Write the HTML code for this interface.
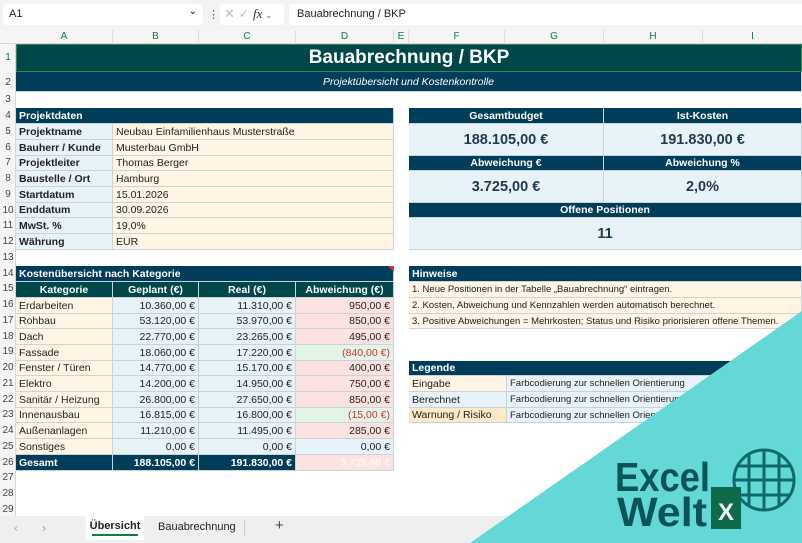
<!DOCTYPE html>
<html><head><meta charset="utf-8"><style>
*{margin:0;padding:0;box-sizing:border-box}
body{width:802px;height:543px;overflow:hidden;background:#fff;font-family:"Liberation Sans",Arial,sans-serif;font-size:10.5px;color:#222;position:relative}
.a{position:absolute;white-space:nowrap;overflow:hidden}
.c{position:absolute;white-space:nowrap;overflow:hidden;display:flex;align-items:center;padding:0 3px;border-right:1px solid #c9d3da;border-bottom:1px solid #c9d3da}
.r{justify-content:flex-end}
.m{justify-content:center}
.nv{background:#003d5a;color:#fff;font-weight:bold}
.tl{background:#00474a;color:#fff;font-weight:bold}
.cr{background:#fff5e2}
.bl{background:#e8f2f9}
.pk{background:#fde2e2}
.gr{background:#e2f3e8;color:#e0302a}
.b{font-weight:bold}
.rn{position:absolute;left:0;width:16px;text-align:center;font-size:10px;color:#444}
.kv{font-size:14.5px;font-weight:bold;color:#1e3a4f;justify-content:center}
</style></head><body>
<div class="a" style="left:0;top:0;width:802px;height:30px;background:#f3f3f3"></div>
<div class="a" style="left:3px;top:4px;width:200px;height:21px;background:#fff;border-radius:4px;padding:4px 6px;font-size:11px">A1<span style="position:absolute;right:6px;top:2px;font-size:10px">&#8964;</span></div>
<div class="a" style="left:208px;top:8px;font-size:11px;color:#555">&#8942;</div>
<div class="a" style="left:220px;top:4px;width:64px;height:21px;background:#fff;border-radius:4px;color:#bbb;font-size:13px;padding:2px 4px">&#10005; &#10003; <i style="color:#333;font-family:'Liberation Serif';font-size:13px">fx</i><span style="font-size:9px;color:#777"> &#8964;</span></div>
<div class="a" style="left:289px;top:4px;width:513px;height:21px;background:#fff;border-radius:4px 0 0 4px;padding:4px 8px;font-size:11px">Bauabrechnung / BKP</div>
<div class="a" style="left:0;top:30px;width:802px;height:14px;background:#f5f5f5;border-bottom:1px solid #d6d6d6"></div>
<div class="a" style="left:16px;top:30px;width:97px;height:14px;text-align:center;color:#107c41;font-size:10px;line-height:14px;border-right:1px solid #ddd">A</div>
<div class="a" style="left:113px;top:30px;width:86px;height:14px;text-align:center;color:#107c41;font-size:10px;line-height:14px;border-right:1px solid #ddd">B</div>
<div class="a" style="left:199px;top:30px;width:97px;height:14px;text-align:center;color:#107c41;font-size:10px;line-height:14px;border-right:1px solid #ddd">C</div>
<div class="a" style="left:296px;top:30px;width:98px;height:14px;text-align:center;color:#107c41;font-size:10px;line-height:14px;border-right:1px solid #ddd">D</div>
<div class="a" style="left:394px;top:30px;width:15px;height:14px;text-align:center;color:#107c41;font-size:10px;line-height:14px;border-right:1px solid #ddd">E</div>
<div class="a" style="left:409px;top:30px;width:96px;height:14px;text-align:center;color:#107c41;font-size:10px;line-height:14px;border-right:1px solid #ddd">F</div>
<div class="a" style="left:505px;top:30px;width:99px;height:14px;text-align:center;color:#107c41;font-size:10px;line-height:14px;border-right:1px solid #ddd">G</div>
<div class="a" style="left:604px;top:30px;width:99px;height:14px;text-align:center;color:#107c41;font-size:10px;line-height:14px;border-right:1px solid #ddd">H</div>
<div class="a" style="left:703px;top:30px;width:99px;height:14px;text-align:center;color:#107c41;font-size:10px;line-height:14px">I</div>
<div class="a" style="left:0;top:44px;width:16px;height:472px;background:#f5f5f5;border-right:1px solid #d6d6d6"></div>
<div class="rn" style="top:52px;color:#107c41">1</div><div class="rn" style="top:77px">2</div><div class="rn" style="top:94px">3</div>
<div class="rn" style="top:110px">4</div><div class="rn" style="top:126px">5</div><div class="rn" style="top:142px">6</div><div class="rn" style="top:157px">7</div><div class="rn" style="top:173px">8</div><div class="rn" style="top:189px">9</div><div class="rn" style="top:205px">10</div><div class="rn" style="top:220px">11</div><div class="rn" style="top:236px">12</div><div class="rn" style="top:252px">13</div><div class="rn" style="top:268px">14</div><div class="rn" style="top:283px">15</div><div class="rn" style="top:299px">16</div><div class="rn" style="top:315px">17</div><div class="rn" style="top:331px">18</div><div class="rn" style="top:346px">19</div><div class="rn" style="top:362px">20</div><div class="rn" style="top:378px">21</div><div class="rn" style="top:394px">22</div><div class="rn" style="top:409px">23</div><div class="rn" style="top:425px">24</div><div class="rn" style="top:441px">25</div><div class="rn" style="top:457px">26</div><div class="rn" style="top:472px">27</div><div class="rn" style="top:488px">28</div><div class="rn" style="top:504px">29</div>
<div class="c m" style="left:16px;top:44px;width:786px;height:28px;background:#00474a;color:#fff;font-weight:bold;font-size:19px;border:1.5px solid #2e8b57">Bauabrechnung / BKP</div>
<div class="c m" style="left:16px;top:72px;width:786px;height:20px;background:#003d5a;color:#fff;font-style:italic;font-size:10.5px">Projektübersicht und Kostenkontrolle</div>
<div class="c nv" style="left:16px;top:108px;width:378px;height:16px">Projektdaten</div>
<div class="c bl b" style="left:16px;top:124px;width:97px;height:16px">Projektname</div><div class="c cr" style="left:113px;top:124px;width:281px;height:16px">Neubau Einfamilienhaus Musterstraße</div>
<div class="c bl b" style="left:16px;top:140px;width:97px;height:16px">Bauherr / Kunde</div><div class="c cr" style="left:113px;top:140px;width:281px;height:16px">Musterbau GmbH</div>
<div class="c bl b" style="left:16px;top:156px;width:97px;height:15px">Projektleiter</div><div class="c cr" style="left:113px;top:156px;width:281px;height:15px">Thomas Berger</div>
<div class="c bl b" style="left:16px;top:171px;width:97px;height:16px">Baustelle / Ort</div><div class="c cr" style="left:113px;top:171px;width:281px;height:16px">Hamburg</div>
<div class="c bl b" style="left:16px;top:187px;width:97px;height:16px">Startdatum</div><div class="c cr" style="left:113px;top:187px;width:281px;height:16px">15.01.2026</div>
<div class="c bl b" style="left:16px;top:203px;width:97px;height:15px">Enddatum</div><div class="c cr" style="left:113px;top:203px;width:281px;height:15px">30.09.2026</div>
<div class="c bl b" style="left:16px;top:218px;width:97px;height:16px">MwSt. %</div><div class="c cr" style="left:113px;top:218px;width:281px;height:16px">19,0%</div>
<div class="c bl b" style="left:16px;top:234px;width:97px;height:16px">Währung</div><div class="c cr" style="left:113px;top:234px;width:281px;height:16px">EUR</div>
<div class="c nv m" style="left:409px;top:108px;width:195px;height:16px">Gesamtbudget</div><div class="c nv m" style="left:604px;top:108px;width:198px;height:16px">Ist-Kosten</div>
<div class="c bl kv" style="left:409px;top:124px;width:195px;height:32px">188.105,00 €</div><div class="c bl kv" style="left:604px;top:124px;width:198px;height:32px">191.830,00 €</div>
<div class="c nv m" style="left:409px;top:156px;width:195px;height:15px">Abweichung €</div><div class="c nv m" style="left:604px;top:156px;width:198px;height:15px">Abweichung %</div>
<div class="c bl kv" style="left:409px;top:171px;width:195px;height:32px">3.725,00 €</div><div class="c bl kv" style="left:604px;top:171px;width:198px;height:32px">2,0%</div>
<div class="c nv m" style="left:409px;top:203px;width:393px;height:15px">Offene Positionen</div>
<div class="c bl kv" style="left:409px;top:218px;width:393px;height:32px">11</div>
<div class="c nv" style="left:16px;top:266px;width:378px;height:16px">Kostenübersicht nach Kategorie</div>
<div class="a" style="left:388px;top:266px;width:0;height:0;border-left:6px solid transparent;border-top:6px solid #e03030"></div>
<div class="c tl m" style="left:16px;top:282px;width:97px;height:16px">Kategorie</div><div class="c tl m" style="left:113px;top:282px;width:86px;height:16px">Geplant (€)</div><div class="c tl m" style="left:199px;top:282px;width:97px;height:16px">Real (€)</div><div class="c tl m" style="left:296px;top:282px;width:98px;height:16px">Abweichung (€)</div>
<div class="c cr" style="left:16px;top:298px;width:97px;height:16px">Erdarbeiten</div><div class="c bl r" style="left:113px;top:298px;width:86px;height:16px">10.360,00 €</div><div class="c bl r" style="left:199px;top:298px;width:97px;height:16px">11.310,00 €</div><div class="c pk r" style="left:296px;top:298px;width:98px;height:16px">950,00 €</div>
<div class="c cr" style="left:16px;top:314px;width:97px;height:15px">Rohbau</div><div class="c bl r" style="left:113px;top:314px;width:86px;height:15px">53.120,00 €</div><div class="c bl r" style="left:199px;top:314px;width:97px;height:15px">53.970,00 €</div><div class="c pk r" style="left:296px;top:314px;width:98px;height:15px">850,00 €</div>
<div class="c cr" style="left:16px;top:329px;width:97px;height:16px">Dach</div><div class="c bl r" style="left:113px;top:329px;width:86px;height:16px">22.770,00 €</div><div class="c bl r" style="left:199px;top:329px;width:97px;height:16px">23.265,00 €</div><div class="c pk r" style="left:296px;top:329px;width:98px;height:16px">495,00 €</div>
<div class="c cr" style="left:16px;top:345px;width:97px;height:16px">Fassade</div><div class="c bl r" style="left:113px;top:345px;width:86px;height:16px">18.060,00 €</div><div class="c bl r" style="left:199px;top:345px;width:97px;height:16px">17.220,00 €</div><div class="c gr r" style="left:296px;top:345px;width:98px;height:16px">(840,00 €)</div>
<div class="c cr" style="left:16px;top:361px;width:97px;height:15px">Fenster / Türen</div><div class="c bl r" style="left:113px;top:361px;width:86px;height:15px">14.770,00 €</div><div class="c bl r" style="left:199px;top:361px;width:97px;height:15px">15.170,00 €</div><div class="c pk r" style="left:296px;top:361px;width:98px;height:15px">400,00 €</div>
<div class="c cr" style="left:16px;top:376px;width:97px;height:16px">Elektro</div><div class="c bl r" style="left:113px;top:376px;width:86px;height:16px">14.200,00 €</div><div class="c bl r" style="left:199px;top:376px;width:97px;height:16px">14.950,00 €</div><div class="c pk r" style="left:296px;top:376px;width:98px;height:16px">750,00 €</div>
<div class="c cr" style="left:16px;top:392px;width:97px;height:16px">Sanitär / Heizung</div><div class="c bl r" style="left:113px;top:392px;width:86px;height:16px">26.800,00 €</div><div class="c bl r" style="left:199px;top:392px;width:97px;height:16px">27.650,00 €</div><div class="c pk r" style="left:296px;top:392px;width:98px;height:16px">850,00 €</div>
<div class="c cr" style="left:16px;top:408px;width:97px;height:15px">Innenausbau</div><div class="c bl r" style="left:113px;top:408px;width:86px;height:15px">16.815,00 €</div><div class="c bl r" style="left:199px;top:408px;width:97px;height:15px">16.800,00 €</div><div class="c gr r" style="left:296px;top:408px;width:98px;height:15px">(15,00 €)</div>
<div class="c cr" style="left:16px;top:423px;width:97px;height:16px">Außenanlagen</div><div class="c bl r" style="left:113px;top:423px;width:86px;height:16px">11.210,00 €</div><div class="c bl r" style="left:199px;top:423px;width:97px;height:16px">11.495,00 €</div><div class="c pk r" style="left:296px;top:423px;width:98px;height:16px">285,00 €</div>
<div class="c cr" style="left:16px;top:439px;width:97px;height:16px">Sonstiges</div><div class="c bl r" style="left:113px;top:439px;width:86px;height:16px">0,00 €</div><div class="c bl r" style="left:199px;top:439px;width:97px;height:16px">0,00 €</div><div class="c bl r" style="left:296px;top:439px;width:98px;height:16px">0,00 €</div>
<div class="c nv" style="left:16px;top:455px;width:97px;height:16px">Gesamt</div><div class="c nv r" style="left:113px;top:455px;width:86px;height:16px">188.105,00 €</div><div class="c nv r" style="left:199px;top:455px;width:97px;height:16px">191.830,00 €</div><div class="c pk r" style="left:296px;top:455px;width:98px;height:16px;color:#fff5f5;font-weight:bold">3.725,00 €</div>
<div class="c nv" style="left:409px;top:266px;width:393px;height:16px">Hinweise</div>
<div class="c cr" style="left:409px;top:282px;width:393px;height:16px;font-size:9.5px">1. Neue Positionen in der Tabelle „Bauabrechnung“ eintragen.</div>
<div class="c cr" style="left:409px;top:298px;width:393px;height:16px;font-size:9.5px">2. Kosten, Abweichung und Kennzahlen werden automatisch berechnet.</div>
<div class="c cr" style="left:409px;top:314px;width:393px;height:15px;font-size:9.5px">3. Positive Abweichungen = Mehrkosten; Status und Risiko priorisieren offene Themen.</div>
<div class="c nv" style="left:409px;top:361px;width:393px;height:15px">Legende</div>
<div class="c cr" style="left:409px;top:376px;width:98px;height:16px">Eingabe</div><div class="c bl" style="left:507px;top:376px;width:295px;height:16px;font-size:9.5px">Farbcodierung zur schnellen Orientierung</div>
<div class="c bl" style="left:409px;top:392px;width:98px;height:16px">Berechnet</div><div class="c bl" style="left:507px;top:392px;width:295px;height:16px;font-size:9.5px">Farbcodierung zur schnellen Orientierung</div>
<div class="c" style="left:409px;top:408px;width:98px;height:15px;background:#fde9c6">Warnung / Risiko</div><div class="c bl" style="left:507px;top:408px;width:295px;height:15px;font-size:9.5px">Farbcodierung zur schnellen Orientierung</div>
<div class="a" style="left:0;top:516px;width:802px;height:27px;background:#efefef"></div>
<div class="a" style="left:14px;top:521px;color:#aaa;font-size:12px">&#8249;</div><div class="a" style="left:42px;top:521px;color:#999;font-size:12px">&#8250;</div>
<div class="a" style="left:86px;top:516px;width:58px;height:24px;background:#fff;text-align:center;font-weight:bold;font-size:11px;line-height:20px">Übersicht<div style="position:absolute;left:6px;right:6px;bottom:4px;height:2px;background:#107c41"></div></div>
<div class="a" style="left:158px;top:521px;font-size:11px">Bauabrechnung</div>
<div class="a" style="left:244px;top:520px;width:1px;height:16px;background:#ccc"></div>
<div class="a" style="left:275px;top:517px;font-size:15px;color:#444">+</div>
<svg class="a" style="left:0;top:0" width="802" height="543">
<polygon points="470,543 802,311 802,543" fill="#64d7d7"/>
<g fill="none" stroke="#0f6a6a" stroke-width="3">
<circle cx="764" cy="480" r="30"/>
<line x1="738" y1="466" x2="790" y2="466"/><line x1="735" y1="480" x2="793" y2="480"/><line x1="738" y1="495" x2="790" y2="495"/>
<line x1="749" y1="453" x2="749" y2="507"/><line x1="764" y1="450" x2="764" y2="510"/><line x1="779" y1="453" x2="779" y2="507"/>
</g>
<rect x="711" y="487" width="30" height="42" fill="#0d6a4a"/>
<text x="726" y="520" font-family="Liberation Sans" font-weight="bold" font-size="24" fill="#fff" text-anchor="middle">X</text>
<text x="615" y="491" font-family="Liberation Sans" font-weight="bold" font-size="41" fill="#0b5458" textLength="95" lengthAdjust="spacingAndGlyphs">Excel</text>
<text x="617" y="526" font-family="Liberation Sans" font-weight="bold" font-size="41" fill="#0b5458" textLength="90" lengthAdjust="spacingAndGlyphs">Welt</text>
</svg>
</body></html>
